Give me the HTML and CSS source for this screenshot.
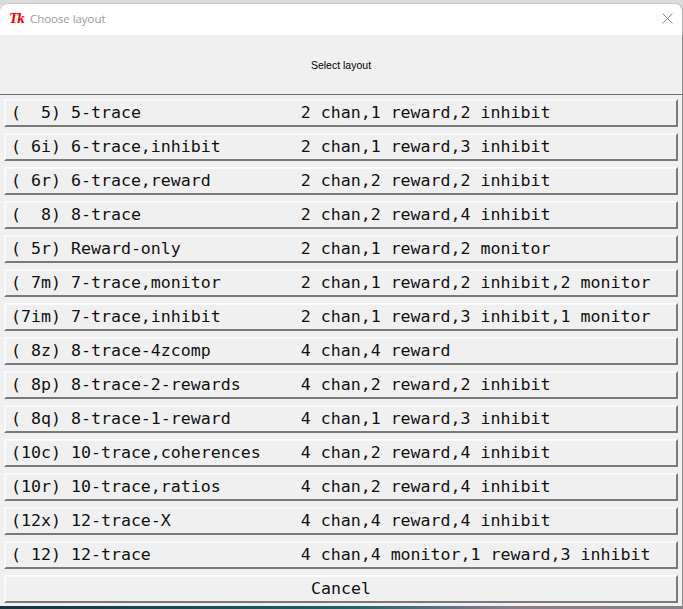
FILE: index.html
```html
<!DOCTYPE html>
<html lang="en">
<head>
    <meta charset="UTF-8">
    <meta name="viewport" content="width=device-width, initial-scale=1.0">
    <title>Choose layout</title>
    <link rel="stylesheet" href="styles.css">
</head>
<body>

    <div class="window">
        <div class="titlebar">
            <span class="tk-icon">Tk</span>
            <span class="title">Choose layout</span>
            <svg class="close" width="11" height="11" viewBox="0 0 11 11">
                <path d="M.5 .5 10.5 10.5M10.5 .5 .5 10.5" stroke="#8a8a8a" fill="none"/>
            </svg>
        </div>

        <div class="prompt">Select layout</div>

        <div class="choices">
            <button type="button" class="choice">(  5) 5-trace                2 chan,1 reward,2 inhibit</button>
            <button type="button" class="choice">( 6i) 6-trace,inhibit        2 chan,1 reward,3 inhibit</button>
            <button type="button" class="choice">( 6r) 6-trace,reward         2 chan,2 reward,2 inhibit</button>
            <button type="button" class="choice">(  8) 8-trace                2 chan,2 reward,4 inhibit</button>
            <button type="button" class="choice">( 5r) Reward-only            2 chan,1 reward,2 monitor</button>
            <button type="button" class="choice">( 7m) 7-trace,monitor        2 chan,1 reward,2 inhibit,2 monitor</button>
            <button type="button" class="choice">(7im) 7-trace,inhibit        2 chan,1 reward,3 inhibit,1 monitor</button>
            <button type="button" class="choice">( 8z) 8-trace-4zcomp         4 chan,4 reward</button>
            <button type="button" class="choice">( 8p) 8-trace-2-rewards      4 chan,2 reward,2 inhibit</button>
            <button type="button" class="choice">( 8q) 8-trace-1-reward       4 chan,1 reward,3 inhibit</button>
            <button type="button" class="choice">(10c) 10-trace,coherences    4 chan,2 reward,4 inhibit</button>
            <button type="button" class="choice">(10r) 10-trace,ratios        4 chan,2 reward,4 inhibit</button>
            <button type="button" class="choice">(12x) 12-trace-X             4 chan,4 reward,4 inhibit</button>
            <button type="button" class="choice">( 12) 12-trace               4 chan,4 monitor,1 reward,3 inhibit</button>
            <button type="button" class="choice cancel">Cancel</button>
        </div>
    </div>

</body>
</html>
```

FILE: styles.css
```css
body {
    margin: 0;
    height: 609px;
    overflow: hidden;
    background: linear-gradient(90deg, #17343a 0, #1f5f66 50%, #8d7c8c 75%, #8a7f8a 100%);
    font-family: "DejaVu Sans Mono", monospace;
}

.window {
    height: 606px;
    width: 683px;
    box-sizing: border-box;
    padding-top: 3px;
    background: #dcdcdc;
}

.titlebar {
    height: 32px;
    box-sizing: border-box;
    background: white;
    border-top: 1px solid #c8c8c8;
    border-right: 1px solid #b0b0b0;
    border-radius: 8px 8px 0 0;
    display: flex;
    align-items: center;
    padding: 0 9px 2px 9px;
}

.tk-icon {
    width: 16px;
    margin-right: 5px;
    color: #f00000;
    font-family: "Liberation Serif", serif;
    font-size: 15px;
    font-weight: bold;
    font-style: italic;
    letter-spacing: -1px;
}

.title {
    color: #9a9a9a;
    font-family: "Open Sans", sans-serif;
    font-size: 11.4px;
    flex: 1;
}

.prompt {
    height: 60px;
    box-sizing: border-box;
    display: flex;
    align-items: center;
    justify-content: center;
    background: #f0f0f0;
    color: black;
    font-family: "Liberation Sans", sans-serif;
    font-size: 10.5px;
    border-bottom: 1px solid #6e6e6e;
    border-right: 1px solid #8a8a8a;
}

.choices {
    height: 511px;
    box-sizing: border-box;
    display: flex;
    flex-direction: column;
    gap: 6px;
    padding: 4px 4px 0 4px;
    background: #f0f0f0;
    border-right: 1px solid #8a8a8a;
}

.choice {
    height: 28px;
    flex: none;
    margin: 0;
    padding: 0 0 2px 5px;
    background: #f0f0f0;
    border: 2px solid;
    border-color: #fafafa #7a7a7a #7a7a7a #fafafa;
    color: #111;
    font-family: inherit;
    font-size: 16.6px;
    text-align: left;
    white-space: pre;
}

.cancel {
    text-align: center;
    padding: 0 0 2px 0;
}
```
